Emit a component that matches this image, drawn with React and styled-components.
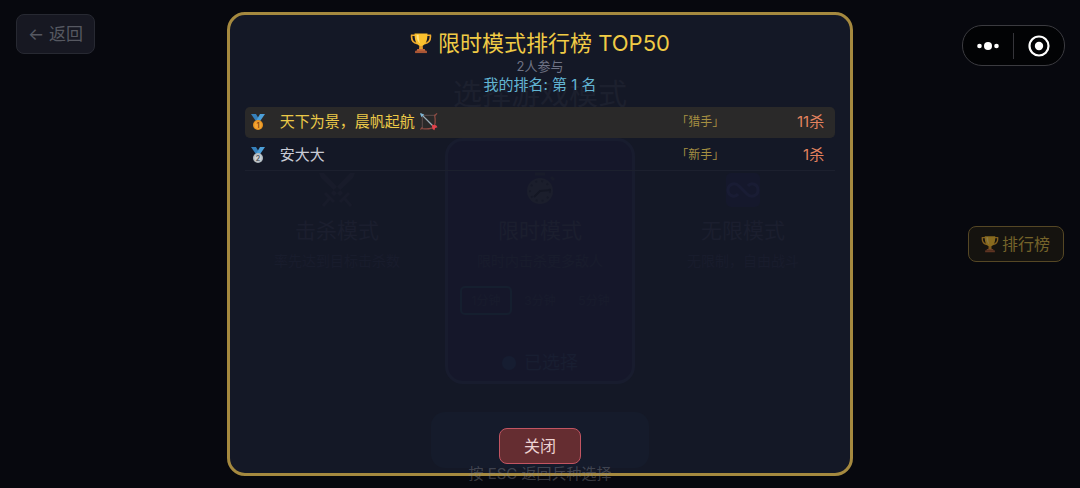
import React from 'react'
import styled, { createGlobalStyle, css } from 'styled-components'

const modes = [
   { id: 'kill', title: '击杀模式', description: '率先达到目标击杀数', icon: 'swords' },
   {
      id: 'time',
      title: '限时模式',
      description: '限时内击杀更多敌人',
      icon: 'clock',
      options: ['1分钟', '3分钟', '5分钟'],
   },
   { id: 'endless', title: '无限模式', description: '无限制，自由战斗', icon: 'infinity' },
]

const players = [
   { rank: 1, name: '天下为景，晨帆起航', bow: true, title: '「猎手」', kills: 11 },
   { rank: 2, name: '安大大', title: '「新手」', kills: 1 },
]

const Trophy = () => (
   <TrophySvg viewBox="0 0 24 24" aria-hidden="true">
      <path
         d="M6 3.500H1.800c-.5 4.600 1.400 8.400 6.400 9.300M18 3.500h4.200c.5 4.600-1.400 8.400-6.400 9.300"
         fill="none"
         stroke="#f0a92c"
         strokeWidth="1.800"
      />
      <path d="M10.300 13h3.400l.5 6H9.800z" fill="#e59a2a" />
      <path d="M5 1.500h14c.2 6.800-1.400 13.300-7 13.800C6.400 14.800 4.800 8.300 5 1.500z" fill="#fbc02d" />
      <path d="M7.200 3h2.300c0 4 .5 7 1.700 9.500C8.300 10.800 7.200 7.500 7.200 3z" fill="#ffe082" />
      <path d="M8 18.500h8l1 2.200H7z" fill="#c0673a" />
      <path d="M5.500 20.500h13V23h-13z" fill="#a95535" />
   </TrophySvg>
)

const Medal = ({ rank }) => (
   <MedalSvg viewBox="0 0 18 18" role="img" aria-label={`第 ${rank} 名`}>
      <path d="M2 1h5l3.500 6-3 2z" fill="#3580bb" />
      <path d="M16 1h-5L7.500 7l3 2z" fill="#4c9fd8" />
      <circle cx="9" cy="12" r="5" fill={rank === 1 ? '#e8931f' : '#b3babf'} />
      <circle cx="9" cy="12" r="3.600" fill={rank === 1 ? '#f2a535' : '#cdd2d6'} />
      <text
         x="9"
         y="14.500"
         textAnchor="middle"
         fontSize="7"
         fontWeight="700"
         fill={rank === 1 ? '#8c4a12' : '#555c63'}
      >
         {rank}
      </text>
   </MedalSvg>
)

const Bow = () => (
   <BowSvg viewBox="0 0 20 20" aria-hidden="true">
      <path d="M3.500 18V5M4 3.500h14" stroke="#6f5a58" strokeWidth="0.8" />
      <path
         d="M1.500 18.500c1-.8 1.600-1.500 2-2.500M19 1.500c-.8 1-1.500 1.600-2.500 2C17.500 9 17 14 15 16s-6 2-11.500 1.500"
         fill="none"
         stroke="#8f4b42"
         strokeWidth="1.300"
      />
      <path d="M2 2l13 13" stroke="#9aadb9" strokeWidth="1.400" />
      <path d="M1 1l4.500 1.500-3 3z" fill="#7fb5d3" />
      <path d="M13.500 13.500l4.500.5 1.500 2-2.500.8-.8 2.500-2-1.500z" fill="#e2424c" />
   </BowSvg>
)

const modeIcons = {
   swords: (
      <>
         <path d="M2 3h5l19 20-3 3L4 8zM38 3h-5L14 23l3 3L36 8z" fill="#0e0f16" />
         <path d="M8 23l9 9M32 23l-9 9M12 29l-6 7M28 29l6 7" stroke="#0e0f16" strokeWidth="3" />
      </>
   ),
   clock: (
      <>
         <circle cx="20" cy="21" r="13" fill="#14141b" />
         <circle cx="20" cy="21" r="10" fill="none" stroke="#0a0a10" strokeWidth="2" strokeDasharray="2 4" />
         <path d="M31 20l-11 1-6 6" fill="none" stroke="#06060a" strokeWidth="2" />
         <path d="M15 4h10M31 7l3 3" stroke="#0e0e16" strokeWidth="3" />
      </>
   ),
   infinity: (
      <>
         <rect x="3" y="3" width="34" height="34" rx="5" fill="#08091a" />
         <path
            d="M15 24c-3 4-10 2-10-4s7-8 11-4l8 8c4 4 11 2 11-4s-7-8-10-4"
            fill="none"
            stroke="#10112a"
            strokeWidth="3"
         />
      </>
   ),
}

export default function App() {
   return (
      <Page>
         <GlobalStyle />
         <Scene aria-hidden="true">
            <SceneTitle>选择游戏模式</SceneTitle>
            <ModeList>
               {modes.map((mode) => (
                  <ModeCard key={mode.id} $selected={mode.id === 'time'}>
                     <ModeIcon viewBox="0 0 40 40">{modeIcons[mode.icon]}</ModeIcon>
                     <ModeName>{mode.title}</ModeName>
                     <ModeDescription>{mode.description}</ModeDescription>
                     {mode.options && (
                        <>
                           <ModeOptions>
                              {mode.options.map((option, index) => (
                                 <ModeOption key={option} $active={index === 0}>
                                    {option}
                                 </ModeOption>
                              ))}
                           </ModeOptions>
                           <SelectedMark>
                              <SelectedDot />
                              已选择
                           </SelectedMark>
                        </>
                     )}
                  </ModeCard>
               ))}
            </ModeList>
            <StartPlate />
         </Scene>

         <BackButton type="button">← 返回</BackButton>
         <Capsule>
            <CapsuleButton type="button" aria-label="更多">
               <svg width="22" height="10" viewBox="0 0 22 10">
                  <g fill="#fff">
                     <circle cx="2.500" cy="5" r="2.300" />
                     <circle cx="11" cy="5" r="4" />
                     <circle cx="19.500" cy="5" r="2.300" />
                  </g>
               </svg>
            </CapsuleButton>
            <CapsuleDivider />
            <CapsuleButton type="button" aria-label="关闭小程序">
               <svg width="22" height="22" viewBox="0 0 22 22">
                  <circle cx="11" cy="11" r="9.500" fill="none" stroke="#fff" strokeWidth="2.200" />
                  <circle cx="11" cy="11" r="4.200" fill="#fff" />
               </svg>
            </CapsuleButton>
         </Capsule>
         <RankButton type="button">
            <Trophy />
            排行榜
         </RankButton>

         <Overlay>
            <Dialog role="dialog" aria-labelledby="board-title">
               <DialogTitle id="board-title">
                  <Trophy />
                  限时模式排行榜 TOP50
               </DialogTitle>
               <PlayerCount>2人参与</PlayerCount>
               <MyRank>我的排名: 第 1 名</MyRank>
               <BoardScroll>
                  <Board>
                     <tbody>
                        {players.map((player) => (
                           <BoardRow key={player.rank} $mine={player.rank === 1}>
                              <RankCell>
                                 <Medal rank={player.rank} />
                              </RankCell>
                              <NameCell>
                                 {player.name} {player.bow && <Bow />}
                              </NameCell>
                              <TitleCell>{player.title}</TitleCell>
                              <KillsCell>{player.kills}杀</KillsCell>
                           </BoardRow>
                        ))}
                     </tbody>
                  </Board>
               </BoardScroll>
               <CloseButton type="button">关闭</CloseButton>
            </Dialog>
         </Overlay>
         <EscHint>按 ESC 返回兵种选择</EscHint>
      </Page>
   )
}

const GlobalStyle = createGlobalStyle`
   * {
      box-sizing: border-box;
   }

   body {
      margin: 0;
      background: #07080e;
      font-family: Inter, 'Noto Sans CJK SC', sans-serif;
   }

   button {
      font-family: inherit;
      cursor: pointer;
   }
`

/* every layer of the screen shares the single grid cell */
const Page = styled.div`
   display: grid;
   grid-template: minmax(100vh, auto) / minmax(0, 1fr);
   overflow: hidden;

   > * {
      grid-area: 1 / 1;
   }
`

const Scene = styled.div`
   display: flex;
   flex-direction: column;
   align-items: center;
   padding-top: 75px;
`

const SceneTitle = styled.div`
   font-size: 29px;
   line-height: 40px;
   color: #17181f;
`

const ModeList = styled.div`
   display: flex;
   gap: 13px;
   margin-top: 23px;
`

const ModeCard = styled.div`
   display: flex;
   flex-direction: column;
   align-items: center;
   width: 190px;
   min-height: 246px;
   padding: 29px 14px 6px;
   border: 3px solid transparent;
   border-radius: 18px;

   ${({ $selected }) =>
      $selected &&
      css`
         background: #090717;
         border-color: #0e111f;
      `}
`

const ModeIcon = styled.svg`
   width: 40px;
   height: 40px;
`

const ModeName = styled.div`
   margin-top: 6px;
   font-size: 21px;
   line-height: 30px;
   color: #14151f;
`

const ModeDescription = styled.div`
   margin-top: 6px;
   font-size: 14px;
   line-height: 18px;
   color: #0f101b;
   white-space: nowrap;
`

const ModeOptions = styled.div`
   display: flex;
   gap: 2px;
   margin-top: 16px;
`

const ModeOption = styled.div`
   width: 52px;
   border: 2px solid ${({ $active }) => ($active ? '#091620' : 'transparent')};
   border-radius: 5px;
   font-size: 12px;
   line-height: 25px;
   text-align: center;
   color: #0e0f1b;
`

const SelectedMark = styled.div`
   display: flex;
   align-items: center;
   gap: 8px;
   margin-top: auto;
   font-size: 18px;
   line-height: 24px;
   color: #0f1424;
`

const SelectedDot = styled.span`
   width: 14px;
   height: 14px;
   border-radius: 50%;
   background: #0a1325;
`

const StartPlate = styled.div`
   width: 218px;
   height: 56px;
   margin-top: 28px;
   border-radius: 14px;
   background: #080f18;
`

const BackButton = styled.button`
   place-self: start;
   margin: 14px 16px;
   padding: 6px 11px;
   border: 1px solid #272932;
   border-radius: 8px;
   background: #171822;
   color: #565861;
   font-size: 17px;
   line-height: 26px;
`

const Capsule = styled.div`
   place-self: start end;
   display: flex;
   align-items: center;
   margin: 25px 15px;
   padding: 6px 0;
   border: 1px solid #3b3b40;
   border-radius: 20px;
   background: #020305;
`

const CapsuleButton = styled.button`
   display: flex;
   align-items: center;
   justify-content: center;
   width: 50px;
   height: 27px;
   padding: 0;
   border: 0;
   background: none;
`

const CapsuleDivider = styled.span`
   width: 1px;
   height: 26px;
   background: #35353a;
`

const TrophySvg = styled.svg`
   width: 1em;
   height: 1em;
`

const RankButton = styled.button`
   place-self: center end;
   display: flex;
   align-items: center;
   gap: 3px;
   margin-right: 16px;
   padding: 5px 13px 5px 12px;
   border: 1px solid #554725;
   border-radius: 8px;
   background: #15130f;
   color: #75632a;
   font-size: 16px;
   line-height: 24px;

   ${TrophySvg} {
      width: 18px;
      height: 18px;
      opacity: 0.5;
   }
`

const Overlay = styled.div`
   z-index: 1;
   display: flex;
   justify-content: center;
   padding: 12px 0;
   pointer-events: none;
`

const Dialog = styled.section`
   display: flex;
   flex-direction: column;
   align-items: center;
   width: 58%;
   padding: 14px 15px 9px;
   border: 3px solid #a5893f;
   border-radius: 18px;
   background: rgba(33, 40, 62, 0.5);
   pointer-events: auto;
`

const DialogTitle = styled.h1`
   display: flex;
   align-items: center;
   gap: 6px;
   margin: 0;
   color: #f0cb45;
   font-size: 22px;
   font-weight: 400;
   line-height: 28px;
`

const PlayerCount = styled.p`
   margin: 0;
   color: #6f7385;
   font-size: 13px;
   line-height: 18px;
`

const MyRank = styled.p`
   margin: 0;
   color: #62b5d3;
   font-size: 15px;
   line-height: 20px;
`

const BoardScroll = styled.div`
   flex: 1;
   width: 100%;
   margin: 10px 0;
   overflow-y: auto;
`

const Board = styled.table`
   width: 100%;
   border-spacing: 0 2px;
   table-layout: fixed;
`

const BoardRow = styled.tr`
   color: ${({ $mine }) => ($mine ? '#ecc948' : '#c9ccd6')};

   td {
      background: ${({ $mine }) => ($mine ? '#2a2929' : 'transparent')};
      border-bottom: 1px solid ${({ $mine }) => ($mine ? '#2a2929' : '#1c202e')};
   }

   td:first-child {
      border-bottom-left-radius: ${({ $mine }) => ($mine ? '5px' : '0')};
      border-top-left-radius: 5px;
   }

   td:last-child {
      border-bottom-right-radius: ${({ $mine }) => ($mine ? '5px' : '0')};
      border-top-right-radius: 5px;
   }
`

const Cell = styled.td`
   height: 31px;
   padding: 0;
   font-size: 15px;
   line-height: 22px;
   white-space: nowrap;
`

const RankCell = styled(Cell)`
   width: 35px;
   padding-left: 4px;
`

const MedalSvg = styled.svg`
   display: block;
   width: 18px;
   height: 18px;
`

const NameCell = styled(Cell)`
   overflow: hidden;
   text-overflow: ellipsis;
`

const BowSvg = styled.svg`
   width: 19px;
   height: 19px;
   vertical-align: -4px;
`

const TitleCell = styled(Cell)`
   width: 120px;
   color: #a58f42;
   font-size: 12px;
   text-align: center;
`

const KillsCell = styled(Cell)`
   width: 75px;
   padding-right: 11px;
   color: #e5835f;
   text-align: right;
`

const CloseButton = styled.button`
   padding: 5px 24px;
   border: 1px solid #c25562;
   border-radius: 8px;
   background: #652d31;
   color: #edd3d3;
   font-size: 16px;
   line-height: 24px;
`

const EscHint = styled.div`
   z-index: 2;
   place-self: end center;
   padding-bottom: 3px;
   color: rgba(135, 137, 145, 0.4);
   font-size: 15px;
   line-height: 22px;
   pointer-events: none;
`
